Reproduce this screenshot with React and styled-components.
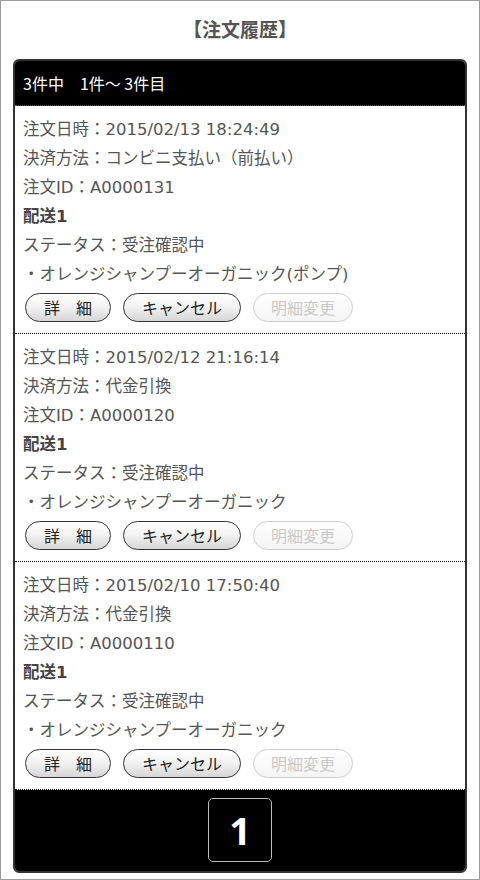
import React from "react";
import styled, { createGlobalStyle } from "styled-components";

const Global = createGlobalStyle`
  html, body { margin: 0; padding: 0; background: #fff; }
  body { font-family: "Noto Sans CJK JP", "Noto Sans", sans-serif; }
  * { box-sizing: border-box; }
`;

const Page = styled.div`
  width: 480px;
  height: 880px;
  border: 1px solid #9c9c9c;
  background: #fff;
  overflow: hidden;
`;

const Title = styled.h1`
  margin: 0;
  padding-top: 12px;
  height: 58px;
  line-height: 32px;
  text-align: center;
  font-size: 19px;
  font-weight: bold;
  color: #555;
`;

const Panel = styled.div`
  margin: 0 12px;
  border: 2px solid #333;
  border-radius: 6px;
  overflow: hidden;
  background: #fff;
`;

const Header = styled.div`
  background: #000;
  color: #fff;
  height: 45px;
  padding: 0 8px;
  display: flex;
  align-items: center;
  font-size: 16px;
  border-bottom: 1px dotted #555;
`;

const Item = styled.div`
  padding: 9px 8px 11px;
  border-bottom: 1px dotted #000;
  &:last-of-type { border-bottom: 1px dotted #666; }
`;

const Line = styled.div`
  height: 29px;
  line-height: 29px;
  font-family: "DejaVu Sans", "Noto Sans CJK JP", sans-serif;
  font-size: 16.5px;
  color: ${(p) => (p.$bold ? "#444" : "#555")};
  font-weight: ${(p) => (p.$bold ? "bold" : "normal")};
  white-space: nowrap;
`;

const Buttons = styled.div`
  display: flex;
  gap: 12px;
  margin-top: 4px;
  padding-left: 2px;
`;

const Btn = styled.button`
  height: 29px;
  width: ${(p) => p.$w}px;
  border-radius: 15px;
  font-family: inherit;
  font-size: 16px;
  padding: 0;
  line-height: 25px;
  border: 1.5px solid ${(p) => (p.disabled ? "#cfcfcf" : "#333")};
  color: ${(p) => (p.disabled ? "#c8c8c8" : "#222")};
  background: ${(p) =>
    p.disabled
      ? "linear-gradient(#fff, #f4f4f4)"
      : "linear-gradient(#fff 0%, #f3f3f3 45%, #d6d6d6 100%)"};
`;

const Footer = styled.div`
  background: #000;
  height: 81px;
  display: flex;
  justify-content: center;
  padding-top: 8px;
`;

const PageBox = styled.div`
  width: 64px;
  height: 64px;
  border: 1px solid #bbb;
  border-radius: 5px;
  color: #fff;
  font-family: "Noto Sans", "Liberation Sans", sans-serif;
  font-size: 38px;
  font-weight: bold;
  display: flex;
  align-items: center;
  justify-content: center;
`;

const orders = [
  {
    date: "2015/02/13 18:24:49",
    pay: "コンビニ支払い（前払い）",
    id: "A0000131",
    product: "・オレンジシャンプーオーガニック(ポンプ)",
  },
  {
    date: "2015/02/12 21:16:14",
    pay: "代金引換",
    id: "A0000120",
    product: "・オレンジシャンプーオーガニック",
  },
  {
    date: "2015/02/10 17:50:40",
    pay: "代金引換",
    id: "A0000110",
    product: "・オレンジシャンプーオーガニック",
  },
];

export default function App() {
  return (
    <Page>
      <Global />
      <Title>【注文履歴】</Title>
      <Panel>
        <Header>3件中　1件～ 3件目</Header>
        {orders.map((o) => (
          <Item key={o.id}>
            <Line>注文日時：{o.date}</Line>
            <Line>決済方法：{o.pay}</Line>
            <Line>注文ID：{o.id}</Line>
            <Line $bold>配送1</Line>
            <Line>ステータス：受注確認中</Line>
            <Line>{o.product}</Line>
            <Buttons>
              <Btn $w={86}>詳　細</Btn>
              <Btn $w={118}>キャンセル</Btn>
              <Btn $w={100} disabled>明細変更</Btn>
            </Buttons>
          </Item>
        ))}
        <Footer>
          <PageBox>1</PageBox>
        </Footer>
      </Panel>
    </Page>
  );
}
